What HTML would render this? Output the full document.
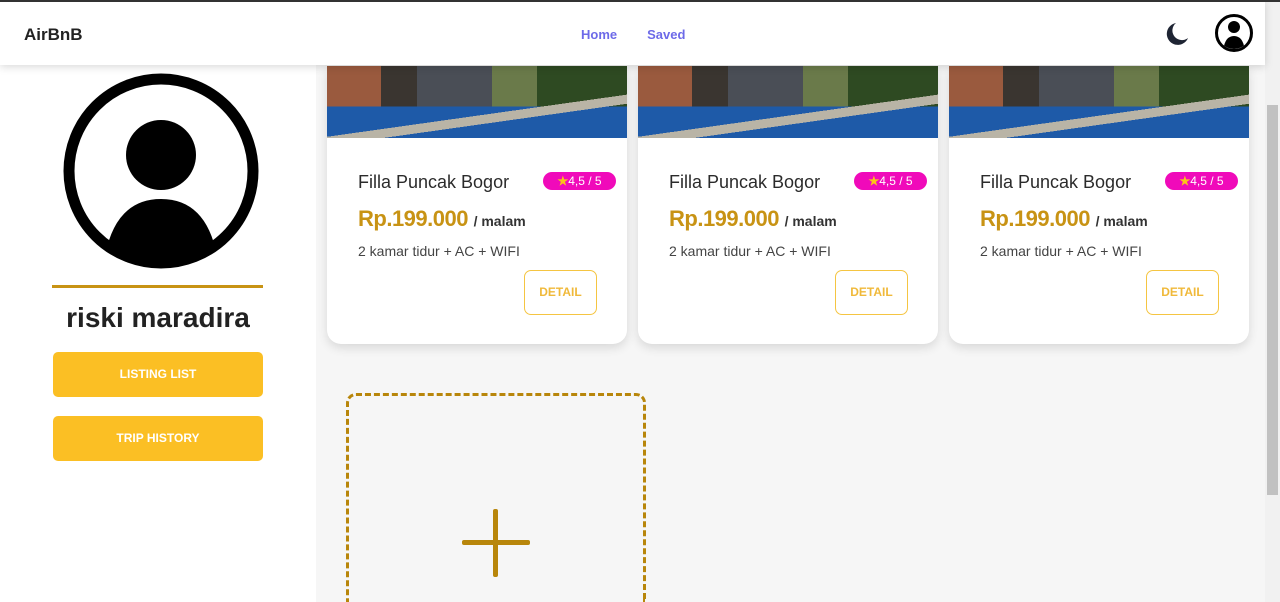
<!DOCTYPE html>
<html style="overflow:hidden;height:602px"><head><meta charset="utf-8"><style>
*{box-sizing:border-box;margin:0;padding:0}
html,body{width:1280px;height:602px;overflow:hidden}
body{font-family:"Liberation Sans",sans-serif;background:#f6f6f6;position:relative}
.wrap{position:absolute;left:0;top:0;width:1280px;height:602px;overflow:hidden}
.topline{position:absolute;left:0;top:0;width:1280px;height:2px;background:#333;z-index:20}
nav{position:absolute;left:0;top:0;width:1265px;height:65px;background:#fff;box-shadow:0 2px 8px rgba(0,0,0,.15);z-index:10}
.logo{position:absolute;left:24px;top:25px;font-size:17px;font-weight:bold;color:#222}
.links{position:absolute;left:581px;top:27px;font-size:13px;font-weight:bold;color:#6d6ae8}
.links span{margin-right:30px}
.side{position:absolute;left:0;top:0;width:316px;height:602px;background:#fff}
.sb{position:absolute;left:1265px;top:0;width:15px;height:602px;background:#f1f1f1}
.thumb{position:absolute;left:1267px;top:105px;width:11px;height:390px;background:#c1c1c1}
.card{position:absolute;top:66px;width:300px;height:278px;background:#fff;border-radius:0 0 14px 14px;box-shadow:0 4px 10px rgba(0,0,0,.12);overflow:hidden}
.img{height:72px;background:
linear-gradient(172deg,transparent 0 62%,#b9b4a6 62% 70%,transparent 70%),
linear-gradient(180deg,transparent 0 56%,#1e5aa8 56% 100%),
linear-gradient(90deg,#9a5a3e 0 18%,#3a3530 18% 30%,#4a4e56 30% 55%,#6a7a4a 55% 70%,#2e4a22 70% 100%)}
.t{position:absolute;left:31px;top:106px;font-size:18px;color:#2b2b2b}
.badge{position:absolute;left:216px;top:106px;width:73px;height:18px;border-radius:9px;background:#f00aba;color:#fff;font-size:12px;text-align:center;line-height:18px}
.badge b{color:#fcc419}
.p{position:absolute;left:31px;top:140px;font-size:22px;color:#c89314;font-weight:bold;letter-spacing:-0.5px}
.p small{font-size:14px;color:#333;font-weight:bold;letter-spacing:0}
.d{position:absolute;left:31px;top:177px;font-size:14px;color:#444}
.det{position:absolute;left:197px;top:204px;width:73px;height:45px;border:1px solid #f5c542;border-radius:7px;color:#f0b93a;font-size:12px;font-weight:bold;text-align:center;line-height:43px}
.btn{position:absolute;left:53px;width:210px;height:45px;background:#fbbf24;border-radius:5px;color:#fff;font-size:12px;font-weight:bold;text-align:center;line-height:45px}
</style></head><body><div class="wrap">
<div class="side"></div>
<div class="sb"></div><div class="thumb"></div>
<div class="topline"></div>
<nav><div class="logo">AirBnB</div><div class="links"><span>Home</span><span>Saved</span></div>
<svg style="position:absolute;left:1164px;top:21px" width="26" height="26" viewBox="0 0 26 26"><path d="M12 2A11 11 0 1 0 24 17 9 9 0 0 1 12 2Z" fill="#1e2433"/></svg>
<svg style="position:absolute;left:1214px;top:13px" width="40" height="40" viewBox="0 0 40 40"><defs><clipPath id="c2"><circle cx="20" cy="20" r="16"/></clipPath></defs><circle cx="20" cy="20" r="17.5" fill="none" stroke="#000" stroke-width="3"/><circle cx="20" cy="14" r="6" fill="#000"/><path d="M9 40Q10 23 20 23Q30 23 31 40Z" fill="#000" clip-path="url(#c2)"/></svg>
</nav>
<svg style="position:absolute;left:63px;top:73px" width="196" height="196" viewBox="0 0 196 196"><defs><clipPath id="c"><circle cx="98" cy="98" r="90"/></clipPath></defs><circle cx="98" cy="98" r="92" fill="none" stroke="#000" stroke-width="11"/><circle cx="98" cy="82" r="35" fill="#000"/><path d="M40 196Q48 126 98 126Q148 126 156 196Z" fill="#000" clip-path="url(#c)"/></svg>
<div style="position:absolute;left:52px;top:285px;width:211px;height:3px;background:#c89314"></div>
<div style="position:absolute;left:0;width:316px;top:302px;text-align:center;font-size:28px;font-weight:bold;color:#222">riski maradira</div>
<div class="btn" style="top:352px">LISTING LIST</div>
<div class="btn" style="top:416px">TRIP HISTORY</div>

<div class="card" style="left:327px"><div class="img"></div><div class="t">Filla Puncak Bogor</div><div class="badge"><b>★</b>4,5 / 5</div><div class="p">Rp.199.000 <small>/ malam</small></div><div class="d">2 kamar tidur + AC + WIFI</div><div class="det">DETAIL</div></div>
<div class="card" style="left:638px"><div class="img"></div><div class="t">Filla Puncak Bogor</div><div class="badge"><b>★</b>4,5 / 5</div><div class="p">Rp.199.000 <small>/ malam</small></div><div class="d">2 kamar tidur + AC + WIFI</div><div class="det">DETAIL</div></div>
<div class="card" style="left:949px"><div class="img"></div><div class="t">Filla Puncak Bogor</div><div class="badge"><b>★</b>4,5 / 5</div><div class="p">Rp.199.000 <small>/ malam</small></div><div class="d">2 kamar tidur + AC + WIFI</div><div class="det">DETAIL</div></div>

<div style="position:absolute;left:346px;top:393px;width:300px;height:209px;border:3px dashed #b8860b;border-bottom:none;border-radius:10px 10px 0 0"></div>
<div style="position:absolute;left:462px;top:540px;width:68px;height:5px;background:#b8860b;border-radius:2px"></div>
<div style="position:absolute;left:493px;top:509px;width:5px;height:68px;background:#b8860b;border-radius:2px"></div>
</div></body></html>
